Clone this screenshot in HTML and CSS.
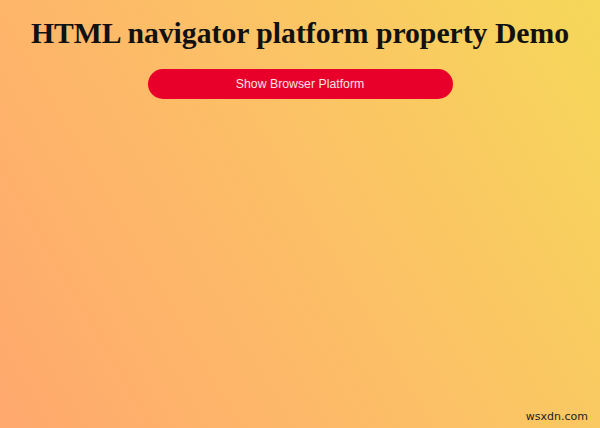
FILE: index.html
```html
<!DOCTYPE html>
<html>
<head>
<meta charset="utf-8">
<link rel="stylesheet" href="styles.css">
</head>
<body>
<main class="page">
  <h1 class="title">HTML navigator platform property Demo</h1>
  <button class="btn">Show Browser Platform</button>
</main>
<span class="mark">wsxdn.com</span>
</body>
</html>
```
FILE: styles.css
```css
html, body {
  margin: 0;
  height: 100%;
}
body {
  background: linear-gradient(60deg, #ffa86e 0%, #fcc166 55%, #f6d85a 100%);
  font-family: "Liberation Serif", serif;
  position: relative;
  overflow: hidden;
}
.page {
  display: flex;
  flex-direction: column;
  align-items: center;
  padding-top: 15px;
}
.title {
  margin: 0;
  font-size: 29.7px;
  font-weight: bold;
  line-height: 36px;
  color: #111;
}
.btn {
  margin-top: 18px;
  width: 305px;
  height: 30px;
  border: none;
  border-radius: 15px;
  background: #e8002a;
  color: #f4e4e8;
  font-family: "Liberation Sans", Arial, sans-serif;
  font-size: 12.3px;
  padding: 0;
}
.mark {
  position: absolute;
  right: 12px;
  bottom: 5px;
  font-family: "DejaVu Sans", sans-serif;
  font-size: 11px;
  color: #222;
}
```
